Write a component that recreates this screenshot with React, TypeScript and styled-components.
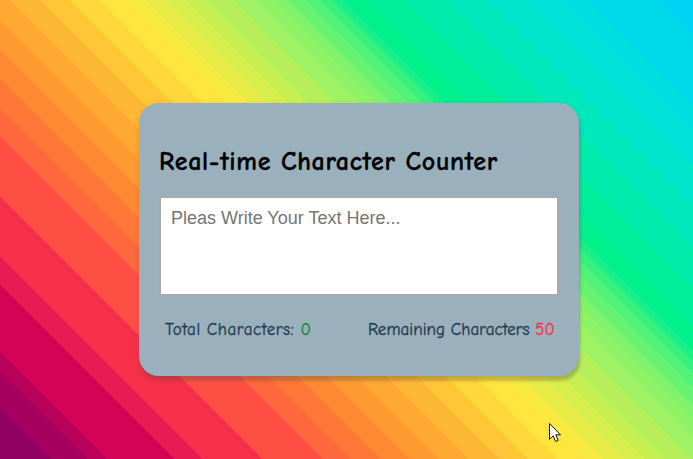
import React, { useState } from 'react';
import styled, { createGlobalStyle } from 'styled-components';

const LIMIT = 50;

// Each band is a colour and its end, measured along the page's edge from the bottom left corner.
const bands: [string, number][] = [
  ['#8f0060', 52], ['#a6005e', 87], ['#b9005b', 108], ['#d50356', 174],
  ['#e81b52', 202], ['#f6304b', 262], ['#ff4f44', 322], ['#ff673c', 351],
  ['#ff7838', 380], ['#ff8a33', 409], ['#ff9a30', 438], ['#ffa832', 468],
  ['#ffb735', 499], ['#ffc738', 528], ['#ffd83b', 558], ['#ffe53d', 583],
  ['#f8ea40', 604], ['#e6ec46', 624], ['#d8ee4c', 644], ['#c8ef52', 663],
  ['#b5f05a', 692], ['#9ef263', 716], ['#8ef367', 733], ['#80f36c', 747],
  ['#66f272', 764], ['#50f279', 778], ['#36f180', 790], ['#18f086', 801],
  ['#00f08b', 824], ['#00ee9a', 864], ['#00eba9', 904], ['#00e8bb', 946],
  ['#00e5cb', 986], ['#00e2d9', 1021], ['#00dee0', 1045],
  ['#00d9e9', 1117], ['#00d2f5', 1152],
];

const gradient = bands
  .map(([color, end], i) => `${color} ${(i ? bands[i - 1][1] : 0) * Math.SQRT1_2}px ${end * Math.SQRT1_2}px`)
  .join(', ');

const GlobalStyle = createGlobalStyle`
  * { box-sizing: border-box; }
  body { margin: 0; overflow: hidden; }
`;

const Page = styled.main`
  position: relative;
  width: 100vw;
  height: 100vh;
  padding: 103px 0 0 139px;
  background: linear-gradient(45deg, ${gradient});
  font-family: "Comic Sans MS", "Comic Neue", Lato, sans-serif;
`;

const Card = styled.section`
  width: 440px;
  height: 273px;
  padding: 42px 20px 0;
  border-radius: 20px;
  background: #9ab0bc;
  box-shadow: 1px 5px 3px rgba(90, 80, 60, 0.3), 0 1px 5px rgba(90, 80, 60, 0.15);
`;

const Title = styled.h1`
  margin: 0 0 17px;
  font-size: 26px;
  line-height: 34px;
  letter-spacing: 0.65px;
  color: #000;
  -webkit-text-stroke: 0.3px currentColor;
  white-space: nowrap;
`;

const TextBox = styled.textarea`
  display: block;
  width: 400px;
  height: 100px;
  padding: 10px;
  border: 2px solid #a9a9a9;
  outline: 0;
  resize: none;
  font: 18px "Liberation Sans", Arial, sans-serif;
  &::placeholder { color: #757575; opacity: 1; }
`;

const Counters = styled.div`
  display: flex;
  justify-content: space-between;
  padding: 22px 4px 0 6px;
`;

const Counter = styled.p<{ $spacing: number }>`
  margin: 0;
  font-size: 17px;
  line-height: 23px;
  letter-spacing: ${({ $spacing }) => $spacing}px;
  color: #22384f;
  -webkit-text-stroke: 0.3px currentColor;
  white-space: nowrap;
`;

const Value = styled.span<{ $color: string }>`
  color: ${({ $color }) => $color};
`;

const Pointer = styled.svg`
  position: absolute;
  left: 548px;
  top: 422px;
`;

export default function App() {
  const [text, setText] = useState('');
  return (
    <Page>
      <GlobalStyle />
      <Card>
        <Title>Real-time Character Counter</Title>
        <TextBox
          placeholder="Pleas Write Your Text Here..."
          maxLength={LIMIT}
          value={text}
          onChange={(e) => setText(e.target.value)}
        />
        <Counters>
          <Counter $spacing={0.53}>Total Characters: <Value $color="#088b27">{text.length}</Value></Counter>
          <Counter $spacing={0.04}>Remaining Characters <Value $color="#ff2b49">{LIMIT - text.length}</Value></Counter>
        </Counters>
      </Card>
      <Pointer width="14" height="21" viewBox="0 0 14 21" aria-hidden="true">
        <path d="M1.5 1.5v15.8l3.6-3.5 2.5 5.7 2.6-1.1-2.4-5.6h4.7z" fill="#fff" stroke="#111" strokeWidth="1" />
      </Pointer>
    </Page>
  );
}
